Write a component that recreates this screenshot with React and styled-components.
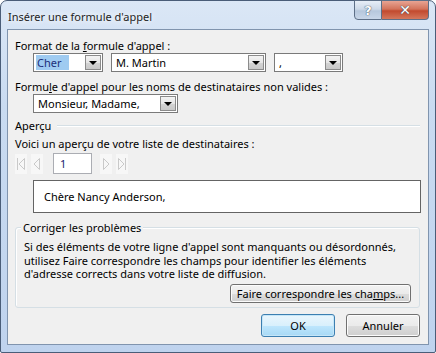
import React from 'react';
import styled, { createGlobalStyle } from 'styled-components';

const Global = createGlobalStyle`
  html, body { margin: 0; padding: 0; background: #ffffff; }
  body { font-family: "Noto Sans", "Open Sans", sans-serif; }
`;

const Window = styled.div`
  width: 436px;
  height: 353px;
  box-sizing: border-box;
  border: 1px solid #4a5d78;
  border-radius: 7px 7px 2px 2px;
  background: linear-gradient(180deg, #dbe7f6 0%, #c9dbf1 30%, #bfd3ee 100%);
  padding: 0 6px 7px 6px;
  display: flex;
  flex-direction: column;
  font-size: 11px;
  color: #000;
`;

const TitleBar = styled.div`
  height: 28px;
  display: flex;
  align-items: flex-start;
  justify-content: space-between;
`;

const Title = styled.div`
  padding-top: 8px;
  padding-left: 1px;
  font-size: 11px;
  color: #1e1e1e;
  text-shadow: 0 0 6px #fff, 0 0 10px #fff;
`;

const Caption = styled.div`
  display: flex;
  margin-top: -1px;
`;

const CapBtn = styled.div`
  height: 20px;
  width: ${({ wide }) => (wide ? '47px' : '28px')};
  box-sizing: border-box;
  border: 1px solid #5d6f87;
  border-left: ${({ wide }) => (wide ? '0' : '1px solid #5d6f87')};
  border-radius: ${({ wide }) => (wide ? '0 0 4px 0' : '0 0 0 4px')};
  background: ${({ wide }) =>
    wide
      ? 'linear-gradient(180deg, #e8a493 0%, #d3735b 45%, #c24a2e 55%, #d4775c 100%)'
      : 'linear-gradient(180deg, #e7eef7 0%, #cdd9e8 45%, #b6c7dc 55%, #c8d6e8 100%)'};
  display: flex;
  align-items: center;
  justify-content: center;
  font-family: "DejaVu Sans", sans-serif;
  font-weight: bold;
  font-size: ${({ wide }) => (wide ? '14px' : '13px')};
  color: #fff;
  text-shadow: 0 0 1px #3a4a5e, 0 0 1px #3a4a5e;
`;

const Client = styled.div`
  flex: 1;
  background: #f0f0f0;
  border: 1px solid #8094ae;
  padding: 8px 7px 0 7px;
  display: flex;
  flex-direction: column;
`;

const Label = styled.div`
  line-height: 15px;
  margin-top: ${({ top }) => top || 0}px;
  white-space: nowrap;
`;

const U = styled.span`
  text-decoration: underline;
`;

const Row = styled.div`
  display: flex;
  align-items: center;
  gap: ${({ gap }) => (gap === undefined ? 8 : gap)}px;
  margin-top: ${({ top }) => top || 0}px;
  padding-left: ${({ indent }) => indent || 0}px;
`;

const Combo = styled.div`
  width: ${({ w }) => w}px;
  height: 19px;
  box-sizing: border-box;
  border: 1px solid #7a7a7a;
  background: #fff;
  display: flex;
  align-items: center;
  padding: 1px;
`;

const ComboText = styled.div`
  flex: 1;
  padding-left: 3px;
  line-height: 15px;
  overflow: hidden;
  white-space: nowrap;
`;

const Selected = styled.span`
  display: inline-block;
  background: #9fcbf1;
  color: #1c2f7a;
  padding: 0 7px 0 1px;
  margin-left: -2px;
`;

const Arrow = styled.div`
  width: 16px;
  height: 15px;
  box-sizing: border-box;
  border: 1px solid #8b8b8b;
  background: linear-gradient(180deg, #f3f3f3 0%, #e6e6e6 50%, #d4d4d4 51%, #c9c9c9 100%);
  display: flex;
  align-items: center;
  justify-content: center;
  &::after {
    content: '';
    border-left: 4px solid transparent;
    border-right: 4px solid transparent;
    border-top: 4px solid #000;
    margin-top: 1px;
  }
`;

const Section = styled.div`
  display: flex;
  align-items: center;
  gap: 6px;
  margin-top: ${({ top }) => top || 0}px;
  line-height: 15px;
  &::after {
    content: '';
    flex: 1;
    height: 1px;
    background: #d5dfe5;
    border-bottom: 1px solid #fff;
    margin-right: 1px;
  }
`;

const NavBtn = styled.div`
  width: 12px;
  height: 20px;
  background: #f7f7f7;
  display: flex;
  align-items: center;
  justify-content: center;
`;

const Spin = styled.div`
  width: 39px;
  height: 21px;
  box-sizing: border-box;
  border: 1px solid #abadb3;
  background: #fff;
  color: #1a1a6e;
  line-height: 19px;
  padding-left: 6px;
  margin: 0 4px 0 6px;
`;

const Preview = styled.div`
  margin: 6px 0 0 18px;
  height: 33px;
  box-sizing: border-box;
  border: 1px solid #646464;
  background: #fff;
  display: flex;
  align-items: center;
  padding-left: 10px;
`;

const Group = styled.div`
  position: relative;
  margin: 14px 1px 0 0;
  border: 1px solid #d5dfe5;
  border-radius: 3px;
  box-shadow: inset 1px 1px 0 #fff;
  padding: 12px 8px 4px 8px;
  display: flex;
  flex-direction: column;
`;

const Legend = styled.div`
  position: absolute;
  top: -8px;
  left: 5px;
  padding: 0 2px;
  background: #f0f0f0;
  line-height: 15px;
`;

const Para = styled.div`
  line-height: 13.5px;
  white-space: nowrap;
`;

const Button = styled.div`
  height: ${({ h }) => h || 19}px;
  width: ${({ w }) => w}px;
  box-sizing: border-box;
  border: 1px solid ${({ primary }) => (primary ? '#3c7fb1' : '#707070')};
  border-radius: 3px;
  background: ${({ primary }) =>
    primary
      ? 'linear-gradient(180deg, #eaf6fd 0%, #d9f0fc 50%, #bee6fd 51%, #a7d9f5 100%)'
      : 'linear-gradient(180deg, #f2f2f2 0%, #ebebeb 50%, #dddddd 51%, #cfcfcf 100%)'};
  box-shadow: inset 0 0 0 1px ${({ primary }) => (primary ? '#c5e6f8' : '#fcfcfc')};
  display: flex;
  align-items: center;
  justify-content: center;
  white-space: nowrap;
`;

const GroupFoot = styled.div`
  display: flex;
  justify-content: flex-end;
  margin-top: 3px;
`;

const Footer = styled.div`
  display: flex;
  justify-content: flex-end;
  gap: 11px;
  margin-top: 6px;
  margin-right: 1px;
`;

const First = () => (
  <svg width="10" height="14" viewBox="0 0 10 14">
    <path d="M1.5 1 V13" stroke="#c9c9c9" fill="none" />
    <path d="M8.5 1.5 L3 7 L8.5 12.5 Z" stroke="#c9c9c9" fill="none" />
  </svg>
);
const Prev = () => (
  <svg width="8" height="14" viewBox="0 0 8 14">
    <path d="M6.5 1.5 L1 7 L6.5 12.5 Z" stroke="#c9c9c9" fill="none" />
  </svg>
);
const Next = () => (
  <svg width="8" height="14" viewBox="0 0 8 14">
    <path d="M1.5 1.5 L7 7 L1.5 12.5 Z" stroke="#c9c9c9" fill="none" />
  </svg>
);
const Last = () => (
  <svg width="10" height="14" viewBox="0 0 10 14">
    <path d="M1.5 1.5 L7 7 L1.5 12.5 Z" stroke="#c9c9c9" fill="none" />
    <path d="M8.5 1 V13" stroke="#c9c9c9" fill="none" />
  </svg>
);

export default function App() {
  return (
    <>
      <Global />
      <Window>
        <TitleBar>
          <Title>Insérer une formule d'appel</Title>
          <Caption>
            <CapBtn>?</CapBtn>
            <CapBtn wide>✕</CapBtn>
          </Caption>
        </TitleBar>
        <Client>
          <Label>Format de la <U>f</U>ormule d'appel :</Label>
          <Row indent={18} gap={8}>
            <Combo w={70}>
              <ComboText><Selected>Cher</Selected></ComboText>
              <Arrow />
            </Combo>
            <Combo w={155}>
              <ComboText>M. Martin</ComboText>
              <Arrow />
            </Combo>
            <Combo w={69}>
              <ComboText>,</ComboText>
              <Arrow />
            </Combo>
          </Row>
          <Label top={7}>Formu<U>l</U>e d'appel pour les noms de destinataires non valides :</Label>
          <Row indent={18}>
            <Combo w={145}>
              <ComboText>Monsieur, Madame,</ComboText>
              <Arrow />
            </Combo>
          </Row>
          <Section top={5}>Aperçu</Section>
          <Label top={3}>Voici un aperçu de votre liste de destinataires :</Label>
          <Row top={2} gap={4}>
            <NavBtn><First /></NavBtn>
            <NavBtn><Prev /></NavBtn>
            <Spin>1</Spin>
            <NavBtn><Next /></NavBtn>
            <NavBtn><Last /></NavBtn>
          </Row>
          <Preview>Chère Nancy Anderson,</Preview>
          <Group>
            <Legend>Corriger les problèmes</Legend>
            <Para>Si des éléments de votre ligne d'appel sont manquants ou désordonnés,</Para>
            <Para>utilisez Faire correspondre les champs pour identifier les éléments</Para>
            <Para>d'adresse corrects dans votre liste de diffusion.</Para>
            <GroupFoot>
              <Button w={181}>Faire correspondre les cha<U>m</U>ps...</Button>
            </GroupFoot>
          </Group>
          <Footer>
            <Button primary w={74} h={23}>OK</Button>
            <Button w={74} h={23}>Annuler</Button>
          </Footer>
        </Client>
      </Window>
    </>
  );
}
